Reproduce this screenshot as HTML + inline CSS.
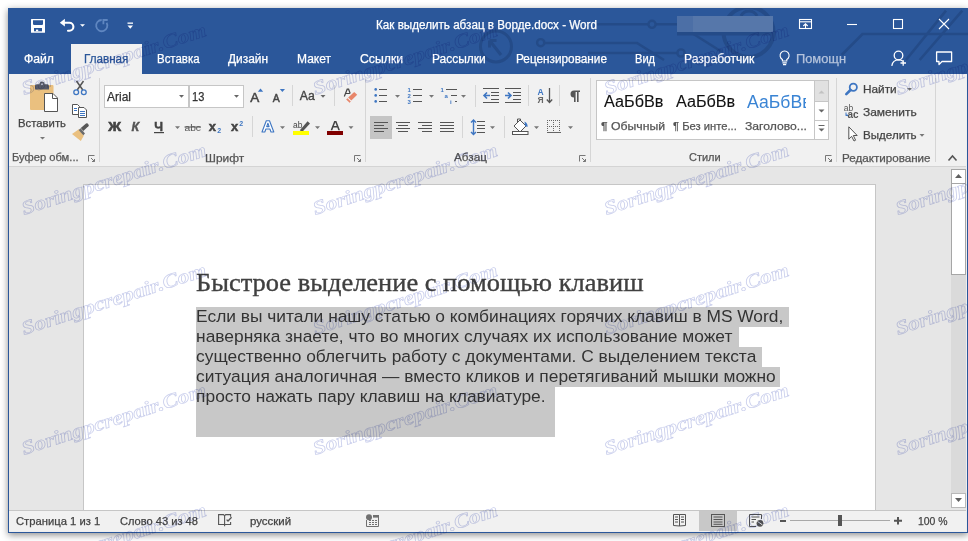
<!DOCTYPE html>
<html><head><meta charset="utf-8"><style>
html,body{margin:0;padding:0;}
body{width:968px;height:541px;overflow:hidden;position:relative;background:#fff;font-family:"Liberation Sans",sans-serif;}
.t{position:absolute;line-height:1;white-space:pre;transform-origin:0 0;-webkit-text-stroke:0.25px currentColor;}
.r{position:absolute;}
</style></head><body>
<div class="r" style="left:8px;top:8px;width:960px;height:525px;box-shadow:0 2px 7px 0px rgba(0,0,0,0.45);background:#2b579a"></div>
<svg class="r" style="left:0;top:0" width="968" height="541" viewBox="0 0 968 541" shape-rendering="crispEdges">
<!-- frame -->
<rect x="8" y="8" width="960" height="66" fill="#2b579a"/>
<rect x="8" y="74" width="960" height="459" fill="#2b579a"/>
<rect x="9" y="74" width="958" height="458" fill="#eeeeee"/>
<!-- ribbon -->
<rect x="9" y="74" width="957" height="92" fill="#f1f1f1"/>
<rect x="71" y="44" width="71" height="30" fill="#f1f1f1"/>
<rect x="9" y="166" width="957" height="1" fill="#d4d4d4"/>
<!-- doc area -->
<rect x="9" y="167" width="957" height="343" fill="#e6e6e6"/>
<rect x="83" y="184" width="793" height="326" fill="#c6c6c6"/>
<rect x="84" y="185" width="791" height="325" fill="#ffffff"/>
<!-- scrollbar -->
<rect x="951" y="169" width="15" height="339" fill="#dadada"/>
<rect x="951" y="169" width="15" height="15" fill="#a6a6a6"/>
<rect x="952" y="170" width="13" height="13" fill="#ffffff"/>
<rect x="951" y="183" width="15" height="92" fill="#a6a6a6"/>
<rect x="952" y="184" width="13" height="90" fill="#ffffff"/>
<rect x="951" y="493" width="15" height="15" fill="#b9b9b9"/>
<rect x="952" y="494" width="13" height="13" fill="#ffffff"/>
<!-- selection -->
<rect x="196" y="307" width="593" height="20" fill="#c8c8c8"/>
<rect x="196" y="327" width="543" height="20" fill="#c8c8c8"/>
<rect x="196" y="347" width="566" height="20" fill="#c8c8c8"/>
<rect x="196" y="367" width="584" height="20" fill="#c8c8c8"/>
<rect x="196" y="387" width="359" height="50" fill="#c8c8c8"/>
<!-- status bar -->
<rect x="9" y="510" width="957" height="1" fill="#c6c6c6"/>
<rect x="9" y="511" width="957" height="20" fill="#f1f1f1"/>
<rect x="699" y="511" width="38" height="20" fill="#c8c8c8"/>
</svg>
<svg class="r" style="left:0;top:0" width="968" height="541" viewBox="0 0 968 541">
<!-- title bar pattern -->
<clipPath id="tb"><rect x="8" y="8" width="960" height="66"/></clipPath><g stroke="#244b88" stroke-width="2.6" fill="none" clip-path="url(#tb)">
  <circle cx="496" cy="46.4" r="15.5" stroke-width="3"/>
  <path d="M501 55 L490 41 M489.5 40.5 V47.5 M489.5 40.5 H496.5" stroke-width="3"/>
  <circle cx="540.7" cy="42.7" r="3.6" stroke-width="2.4"/>
  <path d="M544.3 43 H637 L664 60"/>
  <path d="M597 24.3 H648.4 M655.6 24.3 H690"/>
  <circle cx="652" cy="24.3" r="3.6" stroke-width="2.4"/>
  <path d="M588 53 H677.4"/>
  <circle cx="681" cy="53" r="3.6" stroke-width="2.4"/>
  <path d="M684 28 L722 52"/>
  <circle cx="748.5" cy="32" r="25" stroke-width="4"/>
  <path d="M741 16 A9 9 0 0 1 757 16" stroke-width="3"/>
  <path d="M841.7 55 L862.5 34 H968"/>
  <path d="M946 10.6 L906 60 M962.3 10.6 L919.7 60"/>
</g>
<rect x="677" y="32" width="96" height="3.5" fill="#244b88"/>
<!-- username blur -->
<rect x="677" y="16" width="96" height="16" fill="#5677aa"/>
<rect x="677" y="16" width="16" height="16" fill="#4c6fa6"/>
<!-- QAT -->
<rect x="31" y="19" width="14" height="13.8" fill="#fff" rx="0.5"/>
<path d="M33 20.2 H43 V24.2 L42.2 25 H33.8 L33 24.2 Z" fill="#2b579a"/>
<rect x="34" y="28" width="8" height="3.3" fill="#2b579a"/>
<rect x="36" y="29.6" width="2.2" height="1.7" fill="#fff"/>
<path d="M59.8 22.7 L64.9 18.8 V26.6 Z" fill="#fff"/>
<path d="M64 22.7 H69.4 A4 4 0 0 1 69.4 30.7 H68" fill="none" stroke="#fff" stroke-width="2.1" stroke-linecap="round"/>
<path d="M80 24.2 H85 L82.5 26.8Z" fill="#fff"/>
<g fill="none" stroke="#5f86c0" stroke-width="1.8">
  <path d="M101.7 20 A5.6 5.6 0 1 0 106.6 22.8"/>
  <path d="M103.4 24.3 V20 H107.7"/>
</g>
<rect x="127.5" y="22.5" width="5.5" height="1.3" fill="#fff"/>
<path d="M127.5 25.5 H133 L130.25 28.8Z" fill="#fff"/>
<!-- window controls -->
<g fill="none" stroke="#fff" stroke-width="1.1">
  <rect x="799.5" y="19.5" width="12" height="9"/>
  <path d="M799.5 21.8 H811.5"/>
  <path d="M805.5 28.5 V23.8 M803.3 26 L805.5 23.8 L807.7 26"/>
  <path d="M847 24.5 H857"/>
  <rect x="893.5" y="19.5" width="9" height="9"/>
  <path d="M939 19 L949 29 M949 19 L939 29"/>
</g>
<!-- tab row icons -->
<g fill="none" stroke="#fff" stroke-width="1.1">
  <path d="M782.4 61 V59.4 A4.5 4.5 0 1 1 786.8 59.4 V61 Z"/>
  <path d="M782.4 62.9 H786.8 M783 64.6 H786.2"/>
</g>
<g fill="none" stroke="#fff" stroke-width="1.3">
  <circle cx="898.5" cy="55.5" r="4.3"/>
  <path d="M891.8 65.8 C892.5 61.5 895 59.8 898.5 59.8 C900.5 59.8 902 60.3 903 61.2"/>
  <path d="M900.5 63 H906 M903.2 60.3 V65.8"/>
</g>
<g fill="none" stroke="#fff" stroke-width="1.3" stroke-linejoin="round">
  <path d="M936.6 52 H951.6 V61.5 H942 L939 64.6 V61.5 H936.6 Z"/>
</g>

<!-- ribbon separators -->
<g fill="#d6d6d6" shape-rendering="crispEdges">
  <rect x="99" y="78" width="1" height="84"/>
  <rect x="365" y="78" width="1" height="84"/>
  <rect x="590" y="78" width="1" height="84"/>
  <rect x="836" y="78" width="1" height="84"/>
  <rect x="935" y="78" width="1" height="84"/>
  <rect x="292" y="85" width="1" height="21"/>
  <rect x="334" y="85" width="1" height="21"/>
  <rect x="252" y="116" width="1" height="21"/>
  <rect x="475" y="85" width="1" height="22"/>
  <rect x="462" y="116" width="1" height="22"/>
  <rect x="528" y="85" width="1" height="21"/>
  <rect x="559" y="85" width="1" height="21"/>
  <rect x="504" y="116" width="1" height="22"/>
</g>

<!-- clipboard group -->
<rect x="30" y="85" width="23.5" height="25" rx="1" fill="#eac07f"/>
<path d="M35 89.5 V86 Q35 84.3 36.8 84.3 H47.2 Q49 84.3 49 86 V89.5 Z" fill="#575a66"/>
<circle cx="42" cy="84" r="2.6" fill="#575a66"/>
<circle cx="42" cy="84.2" r="1" fill="#c9cbd3"/>
<path d="M44.5 93.5 H53 L57.5 98 V111.5 H44.5 Z" fill="#fff" stroke="#555" stroke-width="1"/>
<path d="M52.5 93.5 V98.5 H57.5" fill="none" stroke="#555" stroke-width="1"/>
<path d="M40 137 H45 L42.5 139.5Z" fill="#777"/>
<!-- scissors -->
<g fill="none" stroke="#555" stroke-width="1.5">
  <path d="M76.5 81 L82.8 90 M83.5 81 L77.2 90"/>
</g>
<g fill="none" stroke="#3e76c2" stroke-width="1.3">
  <circle cx="76.2" cy="92.2" r="2.4"/><circle cx="83.8" cy="92.2" r="2.4"/>
</g>
<!-- copy -->
<g fill="#fff" stroke="#555" stroke-width="1">
  <path d="M72.5 104.5 H77.5 L79.5 106.5 V114.5 H72.5Z"/>
  <path d="M78.5 107.5 H84 L86.5 110 V117.5 H78.5Z"/>
</g>
<g stroke="#3e76c2" stroke-width="1" shape-rendering="crispEdges">
  <path d="M74 108.5 H77 M74 110.5 H77 M80 111.5 H85 M80 113.5 H85 M80 115.5 H85"/>
</g>
<!-- format painter -->
<path d="M72 134 L78.8 129.2 L83.8 135.8 L80.8 141 Z" fill="#eac07f"/>
<path d="M78.6 130 L80.6 128.2 L85 133.5 L83.3 135.2 Z" fill="#6b6b6b"/>
<path d="M80.8 128 L86 123.5 Q87 122.8 87.7 123.6 L88.6 124.7 Q89.2 125.5 88.4 126.3 L83.3 131 Z" fill="#575757"/>
<!-- dialog launchers -->
<g fill="none" stroke="#777" stroke-width="1">
  <path d="M88.5 161.5 V155.5 H94.5"/><path d="M91 158 L94.5 161.5 M92 161.5 H94.5 V159"/>
  <path d="M354.5 161.5 V155.5 H360.5"/><path d="M357 158 L360.5 161.5 M358 161.5 H360.5 V159"/>
  <path d="M579.5 161.5 V155.5 H585.5"/><path d="M582 158 L585.5 161.5 M583 161.5 H585.5 V159"/>
  <path d="M825.5 161.5 V155.5 H831.5"/><path d="M828 158 L831.5 161.5 M829 161.5 H831.5 V159"/>
</g>
<path d="M948.5 160.5 L952.5 156 L956.5 160.5" fill="none" stroke="#555" stroke-width="1.6"/>

<!-- font group -->
<g shape-rendering="crispEdges">
<rect x="104" y="85" width="140" height="23" fill="#c6c6c6"/>
<rect x="105" y="86" width="83" height="21" fill="#fff"/>
<rect x="190" y="86" width="53" height="21" fill="#fff"/>
</g>
<path d="M179 95 H184 L181.5 97.8Z" fill="#666"/>
<path d="M234 95 H239 L236.5 97.8Z" fill="#666"/>
</svg>
<svg class="r" style="left:0;top:0" width="968" height="541" viewBox="0 0 968 541" font-family="Liberation Sans, sans-serif">
<!-- font row1 -->
<text x="250.3" y="102" font-size="13.5" fill="#444" stroke="#444" stroke-width="0.5">A</text>
<path d="M257.8 91.8 L260.5 88.6 L263.2 91.8Z" fill="#3e76c2"/>
<text x="272.8" y="102" font-size="10.5" fill="#444" stroke="#444" stroke-width="0.45">A</text>
<path d="M279.8 89 L285 89 L282.4 92Z" fill="#3e76c2"/>
<text x="299.8" y="99.8" font-size="12" fill="#444" stroke="#444" stroke-width="0.35" textLength="15" lengthAdjust="spacingAndGlyphs">Aa</text>
<path d="M320.5 95 H325.5 L323 97.8Z" fill="#666"/>
<path d="M344.3 96.5 L347.2 89.2 H348.6 L350.2 93.5 M345.6 93.5 H349.8" fill="none" stroke="#444" stroke-width="1.2"/>
<path d="M348.2 97.6 L354.2 92 L357.2 94.8 L351.3 100.6 Z" fill="#e8866a"/>
<path d="M346.2 99.4 L347.5 98.2 L350.8 101.5 L349.6 102.7 Z" fill="#e8866a"/>
<!-- font row2 -->
<text x="108.3" y="131.2" font-size="12.5" font-weight="700" fill="#444" stroke="#444" stroke-width="0.6" textLength="12.8" lengthAdjust="spacingAndGlyphs">Ж</text>
<text x="131.5" y="131.2" font-size="12.5" font-style="italic" font-weight="700" fill="#555" stroke="#555" stroke-width="0.4">К</text>
<text x="154.3" y="131.2" font-size="12.5" font-weight="700" fill="#444" stroke="#444" stroke-width="0.4">Ч</text>
<rect x="154" y="132" width="10" height="1.2" fill="#444"/>
<path d="M175 126.2 H180 L177.5 129Z" fill="#777"/>
<text x="184.5" y="130.5" font-size="9.5" fill="#555" textLength="16.5" lengthAdjust="spacingAndGlyphs">abc</text>
<rect x="184.5" y="126.5" width="16.5" height="1" fill="#555"/>
<text x="208.8" y="131" font-size="13" font-weight="700" fill="#444" stroke="#444" stroke-width="0.5">x</text>
<text x="217.2" y="133" font-size="7" font-weight="700" fill="#3e76c2">2</text>
<text x="231" y="131" font-size="13" font-weight="700" fill="#444" stroke="#444" stroke-width="0.5">x</text>
<text x="239.3" y="125.5" font-size="7" font-weight="700" fill="#3e76c2">2</text>
<path d="M262 132 L266.3 120.8 H269.5 L273.8 132 H271 L269.9 129 H265.9 L264.8 132 Z M266.7 126.6 H269.1 L267.9 123.2 Z" fill="#fff" stroke="#3e76c2" stroke-width="1.1" stroke-linejoin="round" fill-rule="evenodd"/>
<path d="M280 126.2 H285 L282.5 129Z" fill="#777"/>
<text x="293" y="127.5" font-size="8.5" fill="#444">ab</text>
<path d="M299.8 130.2 L307.6 121.2 L310 123.4 L302.2 132 Z" fill="#555"/>
<rect x="293" y="131" width="16" height="4" fill="#ffff00"/>
<path d="M315 126.2 H320 L317.5 129Z" fill="#777"/>
<path d="M330.6 130.3 L334.2 121 H336.4 L340 130.3 H338.3 L337.3 127.6 H333.3 L332.3 130.3 Z M333.9 126 H336.7 L335.3 122.3 Z" fill="#444" fill-rule="evenodd"/>
<rect x="327" y="131" width="16" height="4" fill="#800000"/>
<path d="M348.5 126.2 H353.5 L351 129Z" fill="#777"/>

<!-- paragraph row1 -->
<g fill="#3e76c2">
  <circle cx="375.7" cy="89.4" r="1.3"/><circle cx="375.7" cy="95.4" r="1.3"/><circle cx="375.7" cy="101.4" r="1.3"/>
</g>
<g fill="#555" shape-rendering="crispEdges">
  <rect x="379" y="89" width="8" height="1"/><rect x="379" y="95" width="8" height="1"/><rect x="379" y="101" width="8" height="1"/>
  <rect x="413" y="89" width="9" height="1"/><rect x="413" y="95" width="9" height="1"/><rect x="413" y="101" width="9" height="1"/>
  <rect x="446" y="89" width="11" height="1"/><rect x="451" y="95" width="6" height="1"/><rect x="455" y="101" width="2" height="1"/>
</g>
<g fill="#3e76c2" font-size="6" font-weight="700">
  <text x="407.5" y="92">1</text><text x="407.5" y="98">2</text><text x="407.5" y="104">3</text>
  <text x="440.5" y="92">1</text><text x="444.5" y="98">a</text><text x="450" y="104">i</text>
</g>
<path d="M395 95 H400 L397.5 97.8Z" fill="#777"/>
<path d="M429 95 H434 L431.5 97.8Z" fill="#777"/>
<path d="M461 95 H466 L463.5 97.8Z" fill="#777"/>
<!-- indent -->
<g fill="#555" shape-rendering="crispEdges">
  <rect x="483" y="88" width="16" height="1"/><rect x="491" y="91.5" width="8" height="1"/><rect x="491" y="95" width="8" height="1"/><rect x="491" y="98.5" width="8" height="1"/><rect x="483" y="102" width="16" height="1"/>
  <rect x="505" y="88" width="16" height="1"/><rect x="513" y="91.5" width="8" height="1"/><rect x="513" y="95" width="8" height="1"/><rect x="513" y="98.5" width="8" height="1"/><rect x="505" y="102" width="16" height="1"/>
</g>
<g fill="none" stroke="#3e76c2" stroke-width="1.6">
  <path d="M484 95.5 H490 M487 92.5 L484 95.5 L487 98.5"/>
  <path d="M505 95.5 H511 M508 92.5 L511 95.5 L508 98.5"/>
</g>
<!-- sort -->
<text x="537.5" y="95" font-size="8.5" font-weight="700" fill="#3e76c2">A</text>
<text x="537.5" y="103" font-size="8.5" font-weight="700" fill="#666">Я</text>
<path d="M549.5 88 V102.5 M546.8 99.5 L549.5 102.5 L552.2 99.5" fill="none" stroke="#555" stroke-width="1.3"/>
<path d="M574 90.5 H580 V92 H578.6 V102 H577 V92 H575.6 V102 H574 V97.5 A3.5 3.5 0 0 1 574 90.5 Z" fill="#555"/>
<!-- paragraph row2 -->
<rect x="370" y="116" width="22" height="23" fill="#c5c5c5"/>
<g fill="#555" shape-rendering="crispEdges">
  <rect x="374" y="122" width="14" height="1"/><rect x="374" y="125" width="10" height="1"/><rect x="374" y="128" width="14" height="1"/><rect x="374" y="131" width="10" height="1"/>
  <rect x="396" y="122" width="14" height="1"/><rect x="398" y="125" width="10" height="1"/><rect x="396" y="128" width="14" height="1"/><rect x="398" y="131" width="10" height="1"/>
  <rect x="418" y="122" width="14" height="1"/><rect x="422" y="125" width="10" height="1"/><rect x="418" y="128" width="14" height="1"/><rect x="422" y="131" width="10" height="1"/>
  <rect x="440" y="122" width="14" height="1"/><rect x="440" y="125" width="14" height="1"/><rect x="440" y="128" width="14" height="1"/><rect x="440" y="131" width="14" height="1"/>
  <rect x="477" y="121" width="8" height="1"/><rect x="477" y="124.5" width="8" height="1"/><rect x="477" y="128" width="8" height="1"/><rect x="477" y="131.5" width="8" height="1"/>
</g>
<path d="M473.5 120 V134.5 M471 122.5 L473.5 120 L476 122.5 M471 132 L473.5 134.5 L476 132" fill="none" stroke="#3e76c2" stroke-width="1.4"/>
<path d="M490 126.2 H495 L492.5 129Z" fill="#777"/>
<!-- shading -->
<path d="M514 126 L520 120 L526 126 L520 132 Z" fill="#fff" stroke="#555" stroke-width="1"/>
<path d="M517.5 122 V119 H520.5 V121" fill="none" stroke="#555" stroke-width="1"/>
<path d="M524.5 121.5 Q528 123 527.5 127 L525 126 Z" fill="#3e76c2"/>
<rect x="512.5" y="131.5" width="15.5" height="3" fill="#fff" stroke="#555" stroke-width="1"/>
<path d="M534 126.2 H539 L536.5 129Z" fill="#777"/>
<!-- borders -->
<g fill="#666" shape-rendering="crispEdges">
  <path d="M547 120h1v1h-1zM549 120h1v1h-1zM551 120h1v1h-1zM553 120h1v1h-1zM555 120h1v1h-1zM557 120h1v1h-1zM559 120h1v1h-1z"/>
  <path d="M547 126h1v1h-1zM549 126h1v1h-1zM551 126h1v1h-1zM553 126h1v1h-1zM555 126h1v1h-1zM557 126h1v1h-1zM559 126h1v1h-1z"/>
  <path d="M547 122h1v1h-1zM547 124h1v1h-1zM547 128h1v1h-1zM547 130h1v1h-1zM553 122h1v1h-1zM553 124h1v1h-1zM553 128h1v1h-1zM553 130h1v1h-1zM559 122h1v1h-1zM559 124h1v1h-1zM559 128h1v1h-1zM559 130h1v1h-1z"/>
  <rect x="546.5" y="132" width="14" height="1.2"/>
</g>
<path d="M568 126.2 H573 L570.5 129Z" fill="#777"/>

<!-- styles gallery -->
<g shape-rendering="crispEdges">
<rect x="596" y="80" width="233" height="60" fill="#c6c6c6"/>
<rect x="597" y="81" width="217" height="58" fill="#fff"/>
<rect x="815" y="81" width="13" height="20" fill="#e1e1e1"/>
<rect x="815" y="102" width="13" height="18" fill="#fff"/>
<rect x="815" y="121" width="13" height="18" fill="#fff"/>
</g>
<path d="M818.5 93.5 H824.5 L821.5 90.5Z" fill="#c2c2c2"/>
<path d="M818.5 109.5 H824.5 L821.5 112.5Z" fill="#666"/>
<rect x="818.5" y="125" width="6" height="1" fill="#666"/>
<path d="M818.5 128.5 H824.5 L821.5 131.5Z" fill="#666"/>

<!-- editing -->
<circle cx="853.3" cy="87.2" r="3.6" fill="none" stroke="#3e76c2" stroke-width="1.8"/>
<path d="M850.5 90 L846.3 94.2" stroke="#3e76c2" stroke-width="2.6" stroke-linecap="round"/>
<path d="M907 88 H912 L909.5 90.8Z" fill="#777"/>
<text x="843.8" y="111" font-size="8.5" fill="#555">ab</text>
<text x="847.5" y="118.2" font-size="10" font-weight="700" fill="#555">ac</text>
<path d="M846 112.5 V115.5 H848 M846 115.5 L847.3 114.2" fill="none" stroke="#3e76c2" stroke-width="1"/>
<path d="M848.8 126.8 V139.2 L851.6 136.3 L854 141 L855.6 140.2 L853.3 135.5 L857.2 135.5 Z" fill="#fff" stroke="#555" stroke-width="1" stroke-linejoin="round"/>
<path d="M919.5 134 H924.5 L922 136.8Z" fill="#777"/>

<!-- status bar icons -->
<g fill="none" stroke="#555" stroke-width="1.1">
  <path d="M224.6 524.5 H218.6 V514.6 H223.5 L224.6 515.8 L225.7 514.6 H230.6 V516.8 M230.6 522 V524.5 H224.6"/>
  <path d="M224.6 515.8 V526.2"/>
  <path d="M226.6 519.6 L228 521 L231.6 517.3" stroke-width="1.3"/>
</g>
<circle cx="369" cy="517.3" r="3" fill="#707070"/>
<rect x="373" y="515" width="6" height="2.6" fill="#707070"/>
<path d="M366.5 520 V526.5 H378.5 V517" fill="none" stroke="#707070" stroke-width="1"/>
<g fill="#707070" shape-rendering="crispEdges">
  <rect x="368.5" y="520" width="2" height="1"/><rect x="371.5" y="520" width="2" height="1"/><rect x="374.5" y="520" width="2" height="1"/>
  <rect x="368.5" y="522" width="2" height="1"/><rect x="371.5" y="522" width="2" height="1"/><rect x="374.5" y="522" width="2" height="1"/>
  <rect x="368.5" y="524" width="2" height="1"/><rect x="371.5" y="524" width="2" height="1"/><rect x="374.5" y="524" width="2" height="1"/>
</g>
<!-- read mode -->
<g fill="none" stroke="#555" stroke-width="1">
  <path d="M673.5 514.5 H679.5 L679.5 526 L673.5 525.5 Z M679.5 514.5 H685.5 V525.5 L679.5 526"/>
  <path d="M675 517 H678 M675 519.5 H678 M675 522 H678 M681 517 H684 M681 519.5 H684 M681 522 H684"/>
</g>
<!-- print layout -->
<g fill="none" stroke="#555" stroke-width="1">
  <rect x="711.5" y="514.5" width="13" height="12"/>
  <path d="M713.5 517 H722.5 M713.5 519.5 H722.5 M713.5 522 H722.5 M713.5 524.3 H722.5"/>
</g>
<!-- web layout -->
<g fill="none" stroke="#555" stroke-width="1">
  <path d="M756 526.5 H749.5 V514.5 H761.5 V519"/>
  <path d="M751.5 517 H759.5 M751.5 519.5 H756 M751.5 522 H754"/>
</g>
<circle cx="760" cy="523.3" r="3.4" fill="#555"/>
<path d="M757.5 521.5 Q760 523 762.5 525" stroke="#f1f1f1" stroke-width="0.9" fill="none"/>
<rect x="780" y="520" width="6" height="2" fill="#555"/>
<rect x="790" y="520" width="100" height="1" fill="#a8a8a8"/>
<rect x="838" y="515" width="4" height="11" fill="#555"/>
<path d="M894 520.8 H902 M898 517 V524.6" stroke="#555" stroke-width="2"/>
</svg>

<span class='t' style='left:376.00px;top:19.04px;font-size:12px;color:#fff;font-family:"Liberation Sans", sans-serif;transform:scaleX(0.9725);'>Как выделить абзац в Ворде.docx - Word</span><span class='t' style='left:24.40px;top:53.04px;font-size:12px;color:#fff;font-family:"Liberation Sans", sans-serif;transform:scaleX(1.0164);'>Файл</span><span class='t' style='left:156.80px;top:53.04px;font-size:12px;color:#fff;font-family:"Liberation Sans", sans-serif;transform:scaleX(0.9550);'>Вставка</span><span class='t' style='left:227.70px;top:53.04px;font-size:12px;color:#fff;font-family:"Liberation Sans", sans-serif;transform:scaleX(0.9940);'>Дизайн</span><span class='t' style='left:297.00px;top:53.04px;font-size:12px;color:#fff;font-family:"Liberation Sans", sans-serif;transform:scaleX(1.0009);'>Макет</span><span class='t' style='left:359.80px;top:53.04px;font-size:12px;color:#fff;font-family:"Liberation Sans", sans-serif;transform:scaleX(1.0201);'>Ссылки</span><span class='t' style='left:432.40px;top:53.04px;font-size:12px;color:#fff;font-family:"Liberation Sans", sans-serif;transform:scaleX(0.9952);'>Рассылки</span><span class='t' style='left:515.50px;top:53.04px;font-size:12px;color:#fff;font-family:"Liberation Sans", sans-serif;transform:scaleX(0.9820);'>Рецензирование</span><span class='t' style='left:635.20px;top:53.04px;font-size:12px;color:#fff;font-family:"Liberation Sans", sans-serif;transform:scaleX(0.9255);'>Вид</span><span class='t' style='left:684.10px;top:53.04px;font-size:12px;color:#fff;font-family:"Liberation Sans", sans-serif;transform:scaleX(1.0059);'>Разработчик</span><span class='t' style='left:83.80px;top:53.04px;font-size:12px;color:#2b579a;font-family:"Liberation Sans", sans-serif;transform:scaleX(0.9718);'>Главная</span><span class='t' style='left:795.70px;top:53.04px;font-size:12px;color:#b4c3dc;font-family:"Liberation Sans", sans-serif;transform:scaleX(1.0699);'>Помощн</span><span class='t' style='left:18.10px;top:117.87px;font-size:11.5px;color:#444;font-family:"Liberation Sans", sans-serif;transform:scaleX(0.9846);'>Вставить</span><span class='t' style='left:11.90px;top:152.49px;font-size:11px;color:#555;font-family:"Liberation Sans", sans-serif;transform:scaleX(1.0151);'>Буфер обм...</span><span class='t' style='left:205.00px;top:152.69px;font-size:11px;color:#555;font-family:"Liberation Sans", sans-serif;transform:scaleX(1.0828);'>Шрифт</span><span class='t' style='left:453.80px;top:152.49px;font-size:11px;color:#555;font-family:"Liberation Sans", sans-serif;transform:scaleX(1.0661);'>Абзац</span><span class='t' style='left:689.10px;top:152.49px;font-size:11px;color:#555;font-family:"Liberation Sans", sans-serif;transform:scaleX(0.9999);'>Стили</span><span class='t' style='left:842.00px;top:152.69px;font-size:11px;color:#555;font-family:"Liberation Sans", sans-serif;transform:scaleX(1.0561);'>Редактирование</span><span class='t' style='left:107.10px;top:90.94px;font-size:12px;color:#333;font-family:"Liberation Sans", sans-serif;transform:scaleX(0.9993);'>Arial</span><span class='t' style='left:192.40px;top:90.94px;font-size:12px;color:#333;font-family:"Liberation Sans", sans-serif;transform:scaleX(0.9207);'>13</span><span class='t' style='left:603.60px;top:94.06px;font-size:16px;color:#111;font-family:"Liberation Sans", sans-serif;transform:scaleX(1.0138);-webkit-text-stroke:0.1px #111;'>АаБбВв</span><span class='t' style='left:675.50px;top:93.96px;font-size:16px;color:#111;font-family:"Liberation Sans", sans-serif;transform:scaleX(1.0103);-webkit-text-stroke:0.1px #111;'>АаБбВв</span><span class='t' style='left:747.10px;top:94.19px;font-size:17.5px;color:#3a84d4;font-family:"Liberation Sans", sans-serif;transform:scaleX(1.0063);-webkit-text-stroke:0;'>АаБбВв</span><span class='t' style='left:600.90px;top:121.47px;font-size:11.5px;color:#555;font-family:"Liberation Sans", sans-serif;transform:scaleX(1.0647);'>¶ Обычный</span><span class='t' style='left:672.90px;top:121.27px;font-size:11.5px;color:#555;font-family:"Liberation Sans", sans-serif;transform:scaleX(0.9750);'>¶ Без инте...</span><span class='t' style='left:745.10px;top:121.47px;font-size:11.5px;color:#555;font-family:"Liberation Sans", sans-serif;transform:scaleX(1.0559);'>Заголово...</span><span class='t' style='left:863.40px;top:83.67px;font-size:11.5px;color:#444;font-family:"Liberation Sans", sans-serif;transform:scaleX(1.0266);'>Найти</span><span class='t' style='left:862.50px;top:106.77px;font-size:11.5px;color:#444;font-family:"Liberation Sans", sans-serif;transform:scaleX(1.0389);'>Заменить</span><span class='t' style='left:863.00px;top:129.67px;font-size:11.5px;color:#444;font-family:"Liberation Sans", sans-serif;transform:scaleX(1.0082);'>Выделить</span><span class='t' style='left:195.80px;top:271.48px;font-size:24.5px;color:#404040;font-family:"Liberation Serif", serif;transform:scaleX(1.0795);-webkit-text-stroke:0.35px #404040;'>Быстрое выделение с помощью клавиш</span><span class='t' style='left:196.10px;top:308.49px;font-size:17.38px;color:#333;font-family:"Liberation Sans", sans-serif;-webkit-text-stroke:0;'>Если вы читали нашу статью о комбинациях горячих клавиш в MS Word,</span><span class='t' style='left:196.10px;top:328.49px;font-size:17.38px;color:#333;font-family:"Liberation Sans", sans-serif;-webkit-text-stroke:0;'>наверняка знаете, что во многих случаях их использование может</span><span class='t' style='left:196.10px;top:348.49px;font-size:17.38px;color:#333;font-family:"Liberation Sans", sans-serif;-webkit-text-stroke:0;'>существенно облегчить работу с документами. С выделением текста</span><span class='t' style='left:196.10px;top:368.49px;font-size:17.38px;color:#333;font-family:"Liberation Sans", sans-serif;-webkit-text-stroke:0;'>ситуация аналогичная — вместо кликов и перетягиваний мышки можно</span><span class='t' style='left:196.10px;top:388.49px;font-size:17.38px;color:#333;font-family:"Liberation Sans", sans-serif;-webkit-text-stroke:0;'>просто нажать пару клавиш на клавиатуре.</span><span class='t' style='left:16.00px;top:516.29px;font-size:11px;color:#444;font-family:"Liberation Sans", sans-serif;transform:scaleX(1.0212);'>Страница 1 из 1</span><span class='t' style='left:119.90px;top:516.29px;font-size:11px;color:#444;font-family:"Liberation Sans", sans-serif;transform:scaleX(1.0080);'>Слово 43 из 48</span><span class='t' style='left:249.50px;top:516.29px;font-size:11px;color:#444;font-family:"Liberation Sans", sans-serif;transform:scaleX(1.0435);'>русский</span><span class='t' style='left:917.50px;top:516.29px;font-size:11px;color:#444;font-family:"Liberation Sans", sans-serif;transform:scaleX(0.9486);'>100 %</span>
<svg class="r" style="left:0;top:0" width="968" height="541" viewBox="0 0 968 541">
<g shape-rendering="crispEdges">
<rect x="806" y="90" width="8" height="22" fill="#fff"/>
<rect x="814" y="80" width="15" height="60" fill="#c6c6c6"/>
<rect x="815" y="81" width="13" height="20" fill="#e1e1e1"/>
<rect x="815" y="102" width="13" height="18" fill="#fff"/>
<rect x="815" y="121" width="13" height="18" fill="#fff"/>
</g>
<path d="M818.5 93.5 H824.5 L821.5 90.5Z" fill="#c2c2c2"/>
<path d="M818.5 109.5 H824.5 L821.5 112.5Z" fill="#666"/>
<rect x="818.5" y="125" width="6" height="1" fill="#666"/>
<path d="M818.5 128.5 H824.5 L821.5 131.5Z" fill="#666"/>
<path d="M955 178 H962 L958.5 174 Z" fill="#606060"/>
<path d="M955 498 H962 L958.5 502 Z" fill="#606060"/>
</svg>

<svg class="r" style="left:0;top:0;mix-blend-mode:multiply" width="968" height="541" viewBox="0 0 968 541">
<g font-family="Liberation Serif, serif" font-style="italic" font-weight="700" font-size="19.5" fill="#ffffff" stroke="#c9ceec" stroke-width="0.7">
<text x="24" y="95" transform="rotate(-18.0 24 95)" textLength="193.0" lengthAdjust="spacingAndGlyphs">Soringpcrepair.Com</text><text x="315.3" y="95" transform="rotate(-18.0 315.3 95)" textLength="193.0" lengthAdjust="spacingAndGlyphs">Soringpcrepair.Com</text><text x="606.6" y="95" transform="rotate(-18.0 606.6 95)" textLength="193.0" lengthAdjust="spacingAndGlyphs">Soringpcrepair.Com</text><text x="897.9" y="95" transform="rotate(-18.0 897.9 95)" textLength="193.0" lengthAdjust="spacingAndGlyphs">Soringpcrepair.Com</text><text x="24" y="215" transform="rotate(-18.0 24 215)" textLength="193.0" lengthAdjust="spacingAndGlyphs">Soringpcrepair.Com</text><text x="315.3" y="215" transform="rotate(-18.0 315.3 215)" textLength="193.0" lengthAdjust="spacingAndGlyphs">Soringpcrepair.Com</text><text x="606.6" y="215" transform="rotate(-18.0 606.6 215)" textLength="193.0" lengthAdjust="spacingAndGlyphs">Soringpcrepair.Com</text><text x="897.9" y="215" transform="rotate(-18.0 897.9 215)" textLength="193.0" lengthAdjust="spacingAndGlyphs">Soringpcrepair.Com</text><text x="24" y="335" transform="rotate(-18.0 24 335)" textLength="193.0" lengthAdjust="spacingAndGlyphs">Soringpcrepair.Com</text><text x="315.3" y="335" transform="rotate(-18.0 315.3 335)" textLength="193.0" lengthAdjust="spacingAndGlyphs">Soringpcrepair.Com</text><text x="606.6" y="335" transform="rotate(-18.0 606.6 335)" textLength="193.0" lengthAdjust="spacingAndGlyphs">Soringpcrepair.Com</text><text x="897.9" y="335" transform="rotate(-18.0 897.9 335)" textLength="193.0" lengthAdjust="spacingAndGlyphs">Soringpcrepair.Com</text><text x="24" y="455" transform="rotate(-18.0 24 455)" textLength="193.0" lengthAdjust="spacingAndGlyphs">Soringpcrepair.Com</text><text x="315.3" y="455" transform="rotate(-18.0 315.3 455)" textLength="193.0" lengthAdjust="spacingAndGlyphs">Soringpcrepair.Com</text><text x="606.6" y="455" transform="rotate(-18.0 606.6 455)" textLength="193.0" lengthAdjust="spacingAndGlyphs">Soringpcrepair.Com</text><text x="897.9" y="455" transform="rotate(-18.0 897.9 455)" textLength="193.0" lengthAdjust="spacingAndGlyphs">Soringpcrepair.Com</text><text x="24" y="575" transform="rotate(-18.0 24 575)" textLength="193.0" lengthAdjust="spacingAndGlyphs">Soringpcrepair.Com</text><text x="315.3" y="575" transform="rotate(-18.0 315.3 575)" textLength="193.0" lengthAdjust="spacingAndGlyphs">Soringpcrepair.Com</text><text x="606.6" y="575" transform="rotate(-18.0 606.6 575)" textLength="193.0" lengthAdjust="spacingAndGlyphs">Soringpcrepair.Com</text><text x="897.9" y="575" transform="rotate(-18.0 897.9 575)" textLength="193.0" lengthAdjust="spacingAndGlyphs">Soringpcrepair.Com</text>
</g></svg>
</body></html>
